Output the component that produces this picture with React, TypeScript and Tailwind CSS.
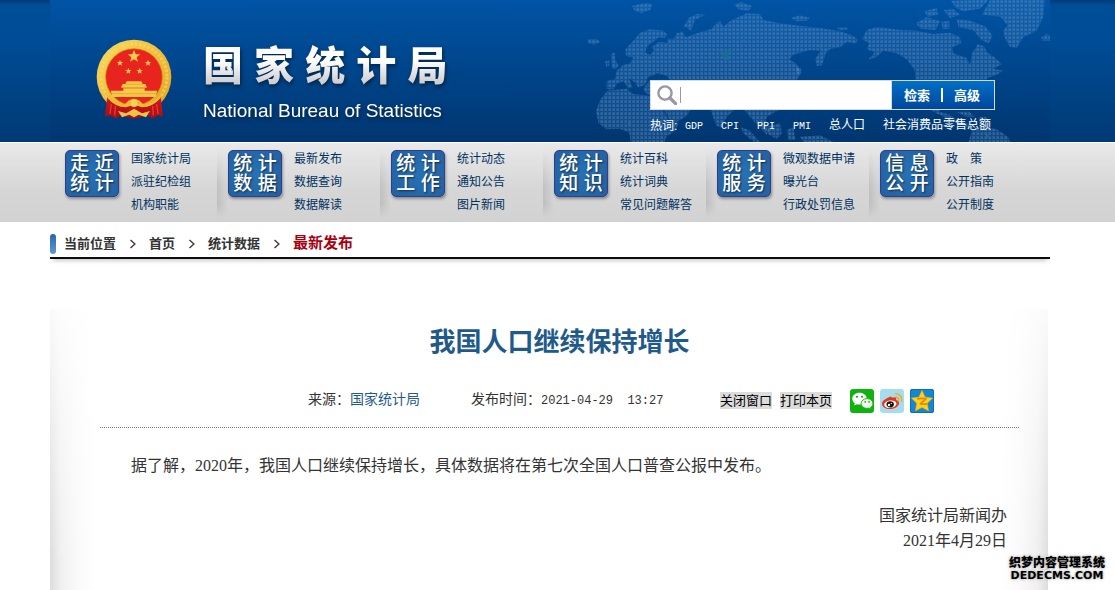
import React from "react";

type NavItem = { title: [string, string]; links: string[] };

const navItems: NavItem[] = [
  { title: ["走 近", "统 计"], links: ["国家统计局", "派驻纪检组", "机构职能"] },
  { title: ["统 计", "数 据"], links: ["最新发布", "数据查询", "数据解读"] },
  { title: ["统 计", "工 作"], links: ["统计动态", "通知公告", "图片新闻"] },
  { title: ["统 计", "知 识"], links: ["统计百科", "统计词典", "常见问题解答"] },
  { title: ["统 计", "服 务"], links: ["微观数据申请", "曝光台", "行政处罚信息"] },
  { title: ["信 息", "公 开"], links: ["政\u3000策", "公开指南", "公开制度"] },
];

const hotWords = ["GDP", "CPI", "PPI", "PMI", "总人口", "社会消费品零售总额"];

function WorldMap() {
  return (
    <svg
      className="absolute right-0 top-0 h-[142px] w-[470px]"
      viewBox="0 0 1410 426"
      aria-hidden="true"
    >
      <defs>
        <pattern id="dots" width="12" height="12" patternUnits="userSpaceOnUse">
          <rect width="12" height="12" fill="#4f86c0" opacity="0.24" />
          <rect x="1" y="1" width="8" height="8" rx="2" fill="#6a9bd0" opacity="0.32" />
        </pattern>
      </defs>
      <g fill="url(#dots)">
        {/* Europe and Asia */}
        <path d="M80 242 L104 238 L110 212 L128 196 L150 190 L160 172 L138 168 L136 148 L160 122 L180 98 L210 88 L250 92 L262 104 L254 114 L236 112 L222 124 L200 140 L196 158 L210 164 L222 150 L216 140 L236 126 L262 128 L262 116 L282 116 L290 100 L308 96 L318 112 L350 100 L392 88 L404 76 L420 62 L430 80 L452 62 L500 40 L540 42 L550 60 L600 70 L660 78 L720 84 L780 94 L812 104 L834 118 L828 130 L800 126 L780 142 L752 146 L738 158 L726 196 L710 198 L706 176 L722 152 L690 150 L640 164 L628 178 L650 192 L664 216 L650 240 L636 250 L630 262 L612 258 L600 270 L604 300 L596 330 L560 350 L556 372 L570 392 L560 404 L530 372 L510 350 L490 326 L462 330 L440 350 L424 384 L408 376 L392 330 L370 310 L340 306 L322 290 L300 290 L312 310 L336 322 L320 348 L290 366 L270 362 L250 326 L240 296 L222 286 L200 282 L190 266 L210 240 L270 240 L262 228 L232 220 L204 232 L196 254 L174 262 L166 248 L146 234 L158 262 L146 266 L130 244 L112 250 L100 268 L80 268 Z" />
        {/* Africa */}
        <path d="M82 272 L140 266 L160 282 L196 286 L232 290 L246 326 L268 364 L296 368 L286 392 L258 410 L254 426 L152 426 L148 398 L120 386 L80 388 L56 370 L48 334 L60 300 Z" />
        {/* British Isles, northern islands, Iceland */}
        <path d="M92 162 L104 158 L106 180 L116 196 L108 208 L96 204 Z M76 184 L88 180 L88 198 L78 200 Z M22 118 L50 116 L60 126 L44 134 L26 130 Z M156 18 L200 8 L218 14 L210 30 L184 40 L164 32 Z M312 78 L326 54 L350 42 L376 44 L344 60 L334 92 Z M462 14 L482 6 L516 18 L506 32 L476 28 Z M632 54 L660 46 L690 54 L680 62 L650 64 Z M770 82 L800 82 L806 88 L778 90 Z" />
        {/* Japan and Southeast Asia */}
        <path d="M650 200 L664 206 L660 226 L648 216 Z M482 380 L510 392 L540 426 L520 424 L490 400 Z M560 380 L600 370 L606 400 L590 416 L566 404 Z M620 390 L640 382 L646 420 L626 420 Z M660 410 L720 406 L760 426 L670 426 Z M330 374 L340 376 L342 388 L332 386 Z" />
        {/* North America */}
        <path d="M846 118 L860 90 L890 80 L960 90 L1010 92 L1060 102 L1110 98 L1140 112 L1144 130 L1116 142 L1120 160 L1160 174 L1170 194 L1176 160 L1194 132 L1214 140 L1220 156 L1246 174 L1266 192 L1240 206 L1270 212 L1250 224 L1222 234 L1206 260 L1160 290 L1150 330 L1110 310 L1080 310 L1080 336 L1110 344 L1130 360 L1180 376 L1170 384 L1110 360 L1050 330 L1020 290 L1008 262 L1004 210 L980 178 L950 160 L910 152 L890 170 L864 180 L884 158 L860 146 L868 130 Z" />
        {/* Arctic islands */}
        <path d="M1008 70 L1040 52 L1080 64 L1066 90 L1022 86 Z M1032 34 L1070 24 L1074 44 L1044 50 Z M1090 30 L1120 28 L1140 44 L1110 54 Z M1112 2 L1180 0 L1226 0 L1200 26 L1150 34 L1126 22 Z M1084 66 L1108 62 L1108 86 L1088 88 Z M1130 58 L1170 62 L1218 80 L1238 108 L1226 130 L1204 120 L1180 90 L1136 82 Z" />
        {/* Greenland */}
        <path d="M1230 0 L1394 0 L1390 50 L1370 92 L1330 112 L1310 144 L1290 140 L1276 118 L1270 92 L1282 76 L1262 50 L1206 44 Z M1384 112 L1400 102 L1410 106 L1410 122 L1388 122 Z" />
        {/* South America and the Caribbean */}
        <path d="M1176 390 L1206 378 L1250 388 L1284 410 L1290 426 L1166 426 Z M1130 336 L1166 334 L1184 350 L1160 350 Z M1196 352 L1218 350 L1222 360 L1200 362 Z" />
      </g>
      <path
        d="M412 146 L424 154 L448 148 L458 154 L446 166 L448 180 L432 180 L424 164 Z"
        fill="#1d6f93"
        opacity="0.6"
      />
      <g fill="#1d7a8f" opacity="0.5">
        <circle cx="494" cy="98" r="4" />
        <circle cx="492" cy="122" r="4" />
        <circle cx="720" cy="138" r="5" />
        <circle cx="1352" cy="12" r="4" />
        <circle cx="1352" cy="34" r="4" />
        <circle cx="148" cy="372" r="5" />
        <circle cx="1222" cy="408" r="5" />
      </g>
    </svg>
  );
}

const star = "M0 -10 L2.6 -3.2 L9.5 -3.1 L4 1.2 L5.9 8.1 L0 4.2 L-5.9 8.1 L-4 1.2 L-9.5 -3.1 L-2.6 -3.2 Z";

function Emblem() {
  return (
    <svg className="h-20 w-[76px] shrink-0" viewBox="28 25 228 240" role="img" aria-label="国徽">
      <defs>
        <linearGradient id="gold" x1="0" y1="0" x2="1" y2="1">
          <stop offset="0" stopColor="#f9dc62" />
          <stop offset="0.5" stopColor="#f0bd3a" />
          <stop offset="1" stopColor="#e2a424" />
        </linearGradient>
        <linearGradient id="ribbon" x1="0" y1="0" x2="0" y2="1">
          <stop offset="0" stopColor="#d4181c" />
          <stop offset="1" stopColor="#a80d14" />
        </linearGradient>
      </defs>
      <circle cx="142" cy="139" r="112" fill="url(#gold)" />
      <circle cx="142" cy="139" r="99" fill="none" stroke="#f7da6b" strokeWidth="9" strokeDasharray="8 5" opacity="0.6" />
      <circle cx="142" cy="139" r="85" fill="#e8241f" stroke="#c98a16" strokeWidth="2" />
      <g fill="#f6c94a">
        <path d={star} transform="translate(142 77) scale(2)" />
        <path d={star} transform="translate(100 97)" />
        <path d={star} transform="translate(184 97)" />
        <path d={star} transform="translate(125 121)" />
        <path d={star} transform="translate(159 121)" />
        <path d="M120 152 H164 L168 160 H176 L180 168 V171 H104 V168 L108 160 H116 Z" />
        <path d="M110 173 H174 V180 H212 L206 199 H78 L72 180 H110 Z" />
      </g>
      <path d="M116 161 H168 M106 171 H178 M76 189 H208" stroke="#e0a024" strokeWidth="2" />
      <path d="M84 199 H200 Q174 218 142 217 Q110 218 84 199 Z" fill="#e8241f" />
      <path d="M62 196 Q82 218 116 224 L168 224 Q202 218 222 196 L229 258 L214 254 L196 264 L184 254 L164 258 L142 264 L120 258 L100 254 L88 264 L70 254 L55 258 Z" fill="url(#ribbon)" />
      <path d="M74 220 L70 250 M86 226 L84 254 M210 220 L214 250 M198 226 L200 254" stroke="#e83a36" strokeWidth="4" />
      <path d="M58 186 Q78 216 114 222 Q124 206 142 204 Q160 206 170 222 Q206 216 226 186 L222 202 Q198 230 166 230 L142 222 L118 230 Q86 230 62 202 Z" fill="#efbb35" />
      <path d="M94 241 L118 248 L142 234 L166 248 L190 241 L178 260 L156 252 L142 260 L128 252 L106 260 Z" fill="#f2c445" />
      <circle cx="142" cy="217" r="12" fill="#f6d055" stroke="#cf8f1b" strokeWidth="2" strokeDasharray="4 3" />
    </svg>
  );
}

function Header() {
  return (
    <header className="bg-[linear-gradient(to_bottom,#003a75_0px,#004d97_5px,#004c96_30%,#003a75_100%)] pr-[15px]">
      <div className="relative mx-auto flex h-[142px] max-w-[1000px] justify-between bg-linear-to-b from-[#0054a5] to-[#003670] pl-[46px] pr-[55px]">
        <WorldMap />
        <div className="relative flex items-start gap-[31px] pt-[39px]">
          <Emblem />
          <div className="text-white drop-shadow-[1px_2px_2px_rgba(0,0,0,0.5)]">
            <h1 className="bg-linear-to-b from-white from-40% to-[#cfcfd2] to-80% bg-clip-text text-[40px]/[54px] font-black whitespace-nowrap text-transparent">
              国 家 统 计 局
            </h1>
            <p className="mt-1.5 font-['Liberation_Sans',sans-serif] text-[19px]/[24px] whitespace-nowrap">
              National Bureau of Statistics
            </p>
          </div>
        </div>
        <div className="relative w-[345px] pt-20">
          <form className="flex h-[30px] border border-[#d3dae2]" onSubmit={(e) => e.preventDefault()}>
            <label className="flex flex-1 items-center bg-white pl-1.5">
              <svg className="size-5 shrink-0" viewBox="0 0 20 20" aria-hidden="true">
                <circle cx="8" cy="8" r="6.6" fill="none" stroke="#9698a6" strokeWidth="2.4" />
                <path d="M13 13 L18.6 18.6" stroke="#9698a6" strokeWidth="3.4" strokeLinecap="round" />
              </svg>
              <span className="ml-[3px] h-4 w-px bg-[#9a9a9a]" />
              <input aria-label="检索内容" className="h-full w-full min-w-0 bg-transparent px-1 text-xs text-gray-800 outline-none" />
            </label>
            <div className="flex w-[103px] items-center justify-center gap-[11px] border-l border-[#d3dae2] bg-linear-to-b from-[#0070c6] to-[#00479b] pr-0.5 text-[13px] font-bold text-white">
              <button type="submit" className="pt-0.5">检索</button>
              <span className="h-[14px] w-0.5 bg-white" />
              <button type="button" className="pt-0.5">高级</button>
            </div>
          </form>
          <div className="mt-1.5 flex text-xs/[20px] whitespace-nowrap text-white">
            <span className="w-[35px]">热词:</span>
            <div className="flex gap-[18px]">
              {hotWords.map((w) => (
                <a key={w} href="#" className="font-['Liberation_Mono','Noto_Sans_CJK_SC',monospace]">
                  <span className={/[A-Z]/.test(w) ? "text-[10px]" : "text-xs"}>{w}</span>
                </a>
              ))}
            </div>
          </div>
        </div>
      </div>
    </header>
  );
}

function Nav() {
  return (
    <nav className="border-t border-white bg-linear-to-b from-[#e9e9e9] via-[#d6d6d6] via-60% to-[#d2d2d2] pr-[15px]">
      <ul className="mx-auto flex h-[79px] max-w-[1000px] pl-1">
        {navItems.map((item, i) => (
          <li key={i} className="flex w-[163px] shrink-0 pt-[7px]">
            <div
              className={
                i === 0
                  ? "w-[11px] shrink-0"
                  : "h-[68px] w-[11px] shrink-0 bg-linear-to-r from-black/10 to-transparent mask-[linear-gradient(to_bottom,transparent,black_50%,black_80%,transparent)]"
              }
            />
            <a
              href="#"
              className="flex h-[47px] w-[54px] shrink-0 flex-col items-center justify-center rounded-[5px] border border-[#2b3f8c] bg-[radial-gradient(circle_at_50%_50%,#2672b4,#2560a0)] text-[19px]/[20px] font-medium whitespace-nowrap text-white shadow-[1px_2px_3px_rgba(0,0,0,0.35)] text-shadow-[1px_1px_2px_rgba(0,0,0,0.6)]"
            >
              <span>{item.title[0]}</span>
              <span>{item.title[1]}</span>
            </a>
            <ul className="-mt-0.5 ml-3 text-xs/[23px] whitespace-nowrap text-[#00315f]">
              {item.links.map((l) => (
                <li key={l}>
                  <a href="#">{l}</a>
                </li>
              ))}
            </ul>
          </li>
        ))}
      </ul>
    </nav>
  );
}

function Arrow() {
  return (
    <svg className="mx-3 h-2.5 w-[9px]" viewBox="0 0 9 10" aria-hidden="true">
      <path d="M2.500 1 L6.900 5 L2.500 9" fill="none" stroke="#4a3436" strokeWidth="1.4" />
    </svg>
  );
}

function Breadcrumb() {
  return (
    <div className="flex h-[37px] items-center border-b-2 border-[#0c0c0c] pt-2 text-[13px] font-bold text-[#333] shadow-[0_5px_4px_-3px_rgba(0,0,0,0.2)]">
      <span className="mr-2 h-5 w-1.5 rounded-full bg-linear-to-b from-[#2467ad] to-[#5f98d3]" />
      <span>当前位置</span>
      <Arrow />
      <a href="#">首页</a>
      <Arrow />
      <a href="#">统计数据</a>
      <Arrow />
      <a href="#" className="text-[15px] text-[#a9000f]">
        最新发布
      </a>
    </div>
  );
}

function WeChatIcon() {
  return (
    <svg className="size-6" viewBox="0 0 24 24" aria-hidden="true">
      <rect width="24" height="24" rx="3" fill="#0eb310" />
      <path d="M9.500 3.800c-4 0-7.200 2.600-7.200 5.900 0 1.900 1 3.500 2.600 4.600l-.8 2.200 2.700-1.300c.9.200 1.800.4 2.700.4 4 0 7.200-2.600 7.200-5.900s-3.200-5.900-7.200-5.900z" fill="#fff" />
      <path d="M17 9.600c-3.300 0-5.900 2.200-5.900 4.900s2.600 4.900 5.900 4.900c.7 0 1.400-.1 2.100-.3l2 1.200-.5-1.900c1.400-.9 2.300-2.300 2.300-3.900 0-2.700-2.600-4.900-5.900-4.900z" fill="#f2f5ef" stroke="#0eb310" strokeWidth="0.9" />
      <g fill="#0a9a0c">
        <circle cx="7" cy="7.800" r="1" />
        <circle cx="12" cy="7.800" r="1" />
        <circle cx="15.200" cy="12.900" r="0.800" />
        <circle cx="19" cy="12.900" r="0.800" />
      </g>
    </svg>
  );
}

function WeiboIcon() {
  return (
    <svg className="size-6" viewBox="0 0 24 24" aria-hidden="true">
      <rect width="24" height="24" rx="3" fill="#a5dcee" />
      <path d="M9 8.200c1.500-.7 2.900-.6 3.200.6 1.800-.8 3.800-.8 4 .6.1.6-.1 1.100-.1 1.500 1.700.5 3 1.600 3 3.200 0 3.300-4.200 6-9 6s-8.100-2.300-8.100-5.300S5.700 9.700 9 8.200z" fill="#e5371c" />
      <ellipse cx="10.300" cy="15.200" rx="6.200" ry="3.700" fill="#fff" transform="rotate(-8 10.300 15.200)" />
      <ellipse cx="10.200" cy="15.300" rx="3.700" ry="3.100" fill="#141414" />
      <circle cx="9" cy="16" r="1.200" fill="#fff" />
      <circle cx="11.300" cy="14.400" r="0.600" fill="#fff" />
      <path d="M15.600 4.800a6 6 0 0 1 6 7.400M15.900 8a3 3 0 0 1 2.800 3.400" fill="none" stroke="#f2ac2c" strokeWidth="1.600" strokeLinecap="round" />
    </svg>
  );
}

function QzoneIcon() {
  return (
    <svg className="size-6" viewBox="0 0 24 24" aria-hidden="true">
      <rect width="24" height="24" rx="2" fill="#1586d2" />
      <rect x="0.500" y="0.500" width="23" height="23" rx="2" fill="none" stroke="#0d6cb4" />
      <path d="M12 1.200l3.200 6.900 7.600.9-5.500 5.200 1.400 7.800L12 18.500 5.300 22l1.400-7.800L1.200 9l7.600-.9z" fill="#fcd118" stroke="#e8a30c" strokeWidth="0.500" />
      <path d="M7.200 9.800c3-.6 6-.6 8.800-.1l-5.600 5.100c2.400.4 4.800.4 7 0" fill="none" stroke="#dd8a14" strokeWidth="1.700" strokeLinejoin="round" />
    </svg>
  );
}

function Article() {
  return (
    <main className="mr-0.5 flex-1 bg-[linear-gradient(to_bottom,white_0,white_12px,rgba(255,255,255,0.850)_14px,transparent_270px),linear-gradient(to_right,#dcdcdc_0,#efefef_10px,#fafafa_28px,white_46px,white_calc(100%-46px),#fafafa_calc(100%-28px),#efefef_calc(100%-10px),#dcdcdc_100%)]">
      <article className="pl-[50px] pr-[29px] pt-[26px]">
        <h2 className="text-center text-[26px]/[40px] font-bold text-[#1f5a8b]">我国人口继续保持增长</h2>
        <div className="mt-[26px] flex h-[40px] items-start border-b border-dotted border-[#777] pl-[208px] text-sm/[22px] whitespace-nowrap text-[#333]">
          <p className="w-[163px]">
            来源：
            <a href="#" className="text-[#1f5a8b]">
              国家统计局
            </a>
          </p>
          <p className="w-[249px]">
            发布时间：
            <time className="font-['Liberation_Mono',monospace] text-xs whitespace-pre">2021-04-29  13:27</time>
          </p>
          <div className="mt-1 flex gap-2 text-[13px]/[17px] text-black">
            <button type="button" className="bg-[#dcdcdc]">
              关闭窗口
            </button>
            <button type="button" className="bg-[#dcdcdc]">
              打印本页
            </button>
          </div>
          <div className="ml-[18px] mt-px flex gap-1.5">
            <a href="#" aria-label="微信">
              <WeChatIcon />
            </a>
            <a href="#" aria-label="微博">
              <WeiboIcon />
            </a>
            <a href="#" aria-label="QQ空间">
              <QzoneIcon />
            </a>
          </div>
        </div>
        <div className="pr-3 font-['Liberation_Serif','Noto_Sans_CJK_SC',sans-serif] text-base/[25px] text-[#333]">
          <p className="mt-[25px] pl-[31px]">
            据了解，2020年，我国人口继续保持增长，具体数据将在第七次全国人口普查公报中发布。
          </p>
          <p className="mt-[25px] text-right">国家统计局新闻办</p>
          <p className="text-right">2021年4月29日</p>
        </div>
      </article>
    </main>
  );
}

export default function App() {
  return (
    <div className="relative flex min-h-screen flex-col bg-white font-['Liberation_Sans','Noto_Sans_CJK_SC',sans-serif]">
      <Header />
      <Nav />
      <div className="flex flex-1 flex-col pr-[15px]">
        <div className="mx-auto flex w-full max-w-[1000px] flex-1 flex-col">
          <Breadcrumb />
          <div className="h-[37px]" />
          <Article />
        </div>
      </div>
      <div className="absolute bottom-2 right-2.5 text-center font-bold whitespace-nowrap text-black text-shadow-[0_0_3px_#888,0_0_2px_white,1px_1px_0_white,-1px_-1px_0_white]">
        <p className="text-xs/[14px] font-black">织梦内容管理系统</p>
        <p className="font-['DejaVu_Sans',sans-serif] text-[11px]/[12px]">DEDECMS.COM</p>
      </div>
    </div>
  );
}
